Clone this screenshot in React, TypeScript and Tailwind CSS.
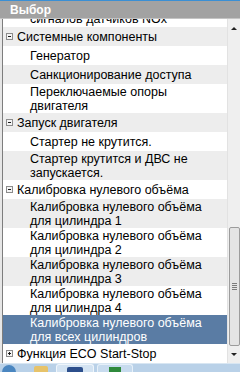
import React from 'react';

type Row = {
  text: string[];
  group?: 'open' | 'closed';
  selected?: boolean;
};

const rows: Row[] = [
  { text: ['Системные компоненты'], group: 'open' },
  { text: ['Генератор'] },
  { text: ['Санкционирование доступа'] },
  { text: ['Переключаемые опоры', 'двигателя'] },
  { text: ['Запуск двигателя'], group: 'open' },
  { text: ['Стартер не крутится.'] },
  { text: ['Стартер крутится и ДВС не', 'запускается.'] },
  { text: ['Калибровка нулевого объёма'], group: 'open' },
  { text: ['Калибровка нулевого объёма', 'для цилиндра 1'] },
  { text: ['Калибровка нулевого объёма', 'для цилиндра 2'] },
  { text: ['Калибровка нулевого объёма', 'для цилиндра 3'] },
  { text: ['Калибровка нулевого объёма', 'для цилиндра 4'] },
  { text: ['Калибровка нулевого объёма', 'для всех цилиндров'], selected: true },
  { text: ['Функция ECO Start-Stop'], group: 'closed' },
];

function Toggle({ open }: { open: boolean }) {
  return (
    <svg width="7" height="7" viewBox="0 0 7 7" className="shrink-0">
      <rect x="0.5" y="0.5" width="6" height="6" fill="#f4f4f4" stroke="#8c8c8c" />
      <line x1="2" y1="3.5" x2="5" y2="3.5" stroke="#1a1a1a" />
      {!open && <line x1="3.5" y1="2" x2="3.5" y2="5" stroke="#1a1a1a" />}
    </svg>
  );
}

function TreeRow({ row, shade }: { row: Row; shade: boolean }) {
  const bg = row.selected ? 'bg-[#5a7ca4] text-white' : shade ? 'bg-[#ededed] text-black' : 'bg-white text-black';
  const height = row.text.length > 1 ? 'h-[29px]' : 'h-[19px]';
  if (row.group) {
    return (
      <div className={`${bg} ${height} flex items-center pl-[3px] gap-[4px]`}>
        <Toggle open={row.group === 'open'} />
        <span className="leading-[14px] whitespace-nowrap">{row.text[0]}</span>
      </div>
    );
  }
  return (
    <div className={`${bg} ${height} flex flex-col justify-center pl-[27px]`}>
      {row.text.map((t) => (
        <span key={t} className="leading-[14px] whitespace-nowrap">
          {t}
        </span>
      ))}
    </div>
  );
}

function ScrollBar() {
  return (
    <div className="w-[13px] bg-[#efefef] border-l border-[#e2e2e2] flex flex-col items-center">
      <div className="h-[17px] w-full flex items-center justify-center">
        <svg width="6" height="4" viewBox="0 0 6 4">
          <path d="M0 4 L3 1 L6 4 Z" fill="#222" />
        </svg>
      </div>
      <div className="flex-1" />
      <div className="h-[119px] w-[11px] rounded-[2px] border border-[#9c9c9c] bg-[#e4e4e4] flex items-center justify-center">
        <div className="flex flex-col gap-[1px]">
          <div className="w-[5px] h-[1px] bg-[#7a7a7a]" />
          <div className="w-[5px] h-[1px] bg-[#7a7a7a]" />
          <div className="w-[5px] h-[1px] bg-[#7a7a7a]" />
          <div className="w-[5px] h-[1px] bg-[#7a7a7a]" />
        </div>
      </div>
      <div className="h-[17px] w-full flex items-center justify-center">
        <svg width="6" height="4" viewBox="0 0 6 4">
          <path d="M0 0 L3 3 L6 0 Z" fill="#222" />
        </svg>
      </div>
    </div>
  );
}

export default function App() {
  return (
    <div
      className="w-[240px] h-[372px] overflow-hidden flex flex-col bg-[#e6e6e6] text-[12.5px]"
      style={{ fontFamily: '"Liberation Sans", Arial, sans-serif' }}
    >
      <div className="h-[1px] bg-[#3a8fd4]" />
      <div className="h-[18px] bg-[#a2a2a2] text-white font-bold text-[12px] pl-[10px] leading-[18px] border-b border-[#c4c4c4]">
        Выбор
      </div>

      <div className="flex-1 min-h-0 flex pl-[2px]">
        <div className="flex-1 min-w-0 overflow-hidden border-l border-[#7d7d7d] bg-white">
          {/* row scrolled half out of view */}
          <div className="h-[8px] overflow-hidden bg-white pl-[27px]">
            <div className="-mt-[7px] leading-[14px] whitespace-nowrap">сигналов датчиков NOx</div>
          </div>
          {rows.map((row, i) => (
            <TreeRow key={i} row={row} shade={i % 2 === 0} />
          ))}
        </div>
        <ScrollBar />
      </div>

      <div className="h-[9px] shrink-0 border-t border-[#d8e6f2] bg-[#b9d1e8] flex items-end gap-[3px] pl-[2px]">
        <div className="w-[14px] h-[7px] rounded-t-full bg-[#4a86c0]" />
        <div className="w-[34px] h-[8px] flex items-end justify-center pl-[10px]">
          <div className="w-[14px] h-[6px] bg-[#e7c36a] rounded-t-[2px]" />
        </div>
        <div className="w-[38px] h-[8px] border border-b-0 border-[#eef5fb] bg-[#d3e3f2] rounded-t-[3px] flex items-end justify-center">
          <div className="w-[16px] h-[5px] bg-[#2c4f8c] rounded-t-[2px]" />
        </div>
        <div className="w-[36px] h-[8px] border border-b-0 border-[#e6f0f9] bg-[#c7dbee] rounded-t-[3px] flex items-end justify-center">
          <div className="w-[12px] h-[5px] bg-[#2f8a3c]" />
        </div>
      </div>
    </div>
  );
}
